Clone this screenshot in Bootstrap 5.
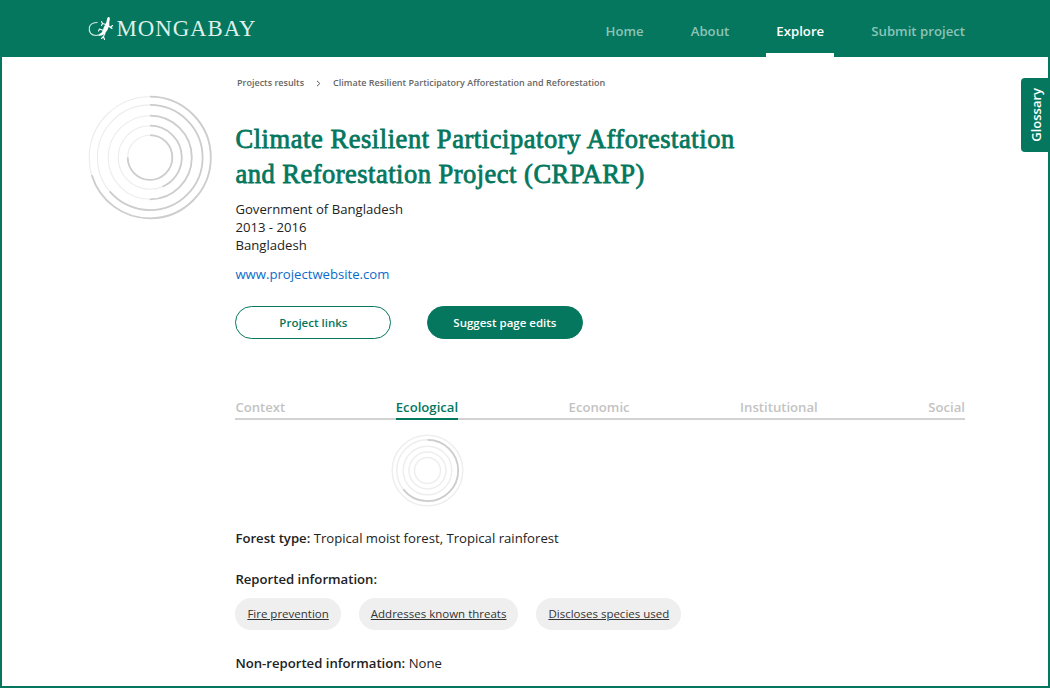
<!DOCTYPE html>
<html lang="en">
<head>
<meta charset="utf-8">
<meta name="viewport" content="width=device-width, initial-scale=1">
<title>Mongabay</title>
<link href="https://cdn.jsdelivr.net/npm/bootstrap@5.3.0/dist/css/bootstrap.min.css" rel="stylesheet">
<style>
:root{--brand:#04775e}
body{font-family:"Open Sans","Noto Sans",sans-serif;font-size:13.15px;line-height:18px;color:#222;background:#fff}
.frame{height:688px;border:2px solid var(--brand);border-top:0;overflow:hidden}
.topbar{height:57px;background:var(--brand);padding:0 83px 0 86px}
.topbar .nav-link{font-size:13.2px;font-weight:600;color:#8cc3b7;padding:0;height:57px;line-height:63px;white-space:nowrap}
.topbar .nav-link.active{color:#fff;width:68px;text-align:center;border-bottom:4px solid #fff}
.page-body{padding:0 83px 0 86px}
.ring-col{width:147.4px;padding-top:38px}
.track{fill:none;stroke:#ececec;stroke-width:1.1}
.arc{fill:none;stroke:#cdcdcd;stroke-width:1.8}
.track-soft{stroke:#eee;stroke-width:1.5}
.crumbs{font-size:9.03px;font-weight:600;color:#666;line-height:14px;padding:19px 0 0 1.6px;gap:12px}
.title{font-family:"Liberation Serif",serif;font-weight:400;-webkit-text-stroke:.8px var(--brand);font-size:26.5px;line-height:35px;color:var(--brand);margin:32px 0 0;white-space:nowrap}
.t1{letter-spacing:.56px}.t2{letter-spacing:.49px}
.site{color:#0a6ccc;text-decoration:none}
.btn-pill{width:156px;height:33px;font-size:11.5px;font-weight:600;line-height:31px;padding:0;border-radius:17px;border:1px solid var(--brand);color:var(--brand)}
.btn-fill{background:var(--brand);color:#fff}
.tabs{border-bottom:2px solid #d2d2d2;margin-top:59.5px;height:22px}
.tabs .nav-link{padding:0;color:#c3c3c3;font-size:13.15px;font-weight:600;line-height:18px;height:22px}
.tabs .nav-link.active{color:var(--brand);border-bottom:2px solid var(--brand)}
.small-ring{margin:13px 0 0 155.500px}
.chip{height:32px;line-height:32px;border-radius:16px;background:#efefef;padding:0 12px;font-size:11.5px;color:#333;text-decoration:underline;text-underline-offset:1px}
.fw{font-weight:600}
.glossary{right:-2px;top:78px;width:29px;height:74px;background:var(--brand);border-radius:4px 0 0 4px;color:#fff;font-size:13px;font-weight:600;z-index:3}
.glossary span{writing-mode:vertical-rl;transform:rotate(180deg)}
</style>
</head>
<body>
<div class="frame position-relative">
<header class="topbar d-flex justify-content-between">
  <a href="#" aria-label="Mongabay">
  <svg width="170" height="57" viewBox="88 0 170 57">
    <path d="M97.500 22.500Q91 22.500 89.400 27C88.500 32 91 35.500 96 35.500Q99.500 35.500 102 33" fill="none" stroke="#d5ebe4" stroke-width="1.1"/>
    <path d="M106.800 20.500Q107 17 108.800 17C110.500 17.500 109.800 20 109.300 22Q109.700 25 108.500 27.500C107.500 30.500 105.500 33 103.500 34.500Q101 36.300 98.500 35.500Q102 33.500 103 30C103.500 27 105.500 24.500 106.200 22.500Z" fill="#fff"/>
    <path d="M106 24.500L102.500 23.500L101.500 21.500M102.500 23.500L101.500 25.500M108.800 26L110.500 27.500L112.500 25.500M110.500 27.500L112 28.500M103.500 30.500L99.500 29L98.500 31M105 33L103.500 36.500L101.500 38.500M103.500 36.500L104.500 39.500" fill="none" stroke="#fff" stroke-width="1.1" stroke-linecap="round" stroke-linejoin="round"/>
    <text x="116.500" y="36.300" textLength="139" lengthAdjust="spacing" font-family="Liberation Serif, serif" font-size="22.800" fill="#dff0eb">MONGABAY</text>
  </svg></a>
  <nav class="nav flex-nowrap">
    <a class="nav-link" href="#" style="margin-right:47px">Home</a>
    <a class="nav-link" href="#" style="margin-right:37px">About</a>
    <a class="nav-link active" href="#" style="margin-right:37px">Explore</a>
    <a class="nav-link" href="#">Submit project</a>
  </nav>
</header>
<button class="glossary position-absolute border-0 p-0 d-flex align-items-center justify-content-center"><span>Glossary</span></button>
<main class="page-body d-flex">
  <aside class="ring-col flex-shrink-0">
    <svg class="d-block" width="125" height="125" viewBox="-62 -62.500 125 125">
      <circle class="track" r="60.800"/><circle class="track" r="52.600"/><circle class="track" r="41.800"/><circle class="track" r="31.800"/><circle class="track" r="22.300"/>
      <g transform="rotate(-90)">
      <circle class="arc" r="60.800" pathLength="360" stroke-dasharray="253 360"/>
      <circle class="arc" r="52.600" pathLength="360" stroke-dasharray="230 360"/>
      <circle class="arc" r="41.800" pathLength="360" stroke-dasharray="180 360"/>
      <circle class="arc" r="31.800" pathLength="360" stroke-dasharray="157 360"/>
      <circle class="arc" r="22.300" pathLength="360" stroke-dasharray="270 360"/></g>
    </svg>
  </aside>
  <section class="flex-grow-1">
    <nav class="crumbs d-flex align-items-center"><span>Projects results</span>
      <svg width="5" height="7" viewBox="0 0 5 7"><path d="M1 .8L3.800 3.500L1 6.200" fill="none" stroke="#555" stroke-width="1"/></svg>
      <span>Climate Resilient Participatory Afforestation and Reforestation</span></nav>
    <h1 class="title"><span class="t1">Climate Resilient Participatory Afforestation</span><br><span class="t2">and Reforestation Project (CRPARP)</span></h1>
    <div style="margin-top:7.5px">Government of Bangladesh<br>2013 - 2016<br>Bangladesh</div>
    <div style="margin-top:11px"><a class="site" href="#">www.projectwebsite.com</a></div>
    <div class="d-flex" style="gap:35.5px;margin-top:23px"><button class="btn btn-pill">Project links</button><button class="btn btn-pill btn-fill">Suggest page edits</button></div>
    <nav class="tabs nav d-flex justify-content-between flex-nowrap">
      <a class="nav-link" href="#">Context</a><a class="nav-link active" href="#">Ecological</a><a class="nav-link" href="#">Economic</a><a class="nav-link" href="#">Institutional</a><a class="nav-link" href="#">Social</a>
    </nav>
    <svg class="small-ring d-block" width="74" height="74" viewBox="-36.500 -37.500 74 74">
      <circle class="track track-soft" r="35.300"/><circle class="track track-soft" r="30.700"/><circle class="track track-soft" r="24.300"/><circle class="track track-soft" r="18.500"/><circle class="track track-soft" r="13"/>
      <circle class="arc" r="30.700" transform="rotate(-90)" pathLength="360" stroke-dasharray="232 360"/>
    </svg>
    <div style="margin-top:21.5px"><span class="fw">Forest type:</span> Tropical moist forest, Tropical rainforest</div>
    <div class="fw" style="margin-top:23px">Reported information:</div>
    <div class="d-flex" style="gap:18px;margin-top:10px"><a class="chip" href="#">Fire prevention</a><a class="chip" href="#">Addresses known threats</a><a class="chip" href="#">Discloses species used</a></div>
    <div style="margin-top:24px"><span class="fw">Non-reported information:</span> None</div>
  </section>
</main>
</div>
<script src="https://cdn.jsdelivr.net/npm/bootstrap@5.3.0/dist/js/bootstrap.bundle.min.js"></script>
</body>
</html>
